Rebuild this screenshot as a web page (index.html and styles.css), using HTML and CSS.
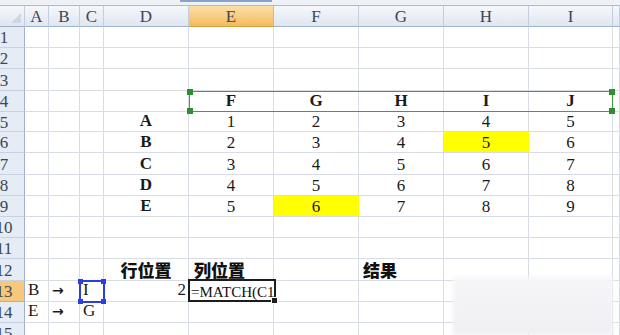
FILE: index.html
```html
<!DOCTYPE html>
<html lang="zh-CN">
<head>
    <meta charset="UTF-8">
    <meta name="viewport" content="width=device-width, initial-scale=1.0">
    <title>MATCH</title>
    <link rel="stylesheet" href="styles.css">
</head>
<body>

<div class="topbar"><span class="topbar-tab"></span></div>
<div class="sheet-wrap">
    <div class="sheet" id="sheet"></div>
</div>
<div class="blur-patch"></div>

<script>
    const letters = ['A', 'B', 'C', 'D', 'E', 'F', 'G', 'H', 'I', 'J'];
    const sheet = document.getElementById('sheet');

    // セルの中身
    const cells = {
        E4: ['F', 'bold'], F4: ['G', 'bold'], G4: ['H', 'bold'], H4: ['I', 'bold'], I4: ['J', 'bold'],
        D5: ['A', 'bold'], D6: ['B', 'bold'], D7: ['C', 'bold'], D8: ['D', 'bold'], D9: ['E', 'bold'],
        D12: ['行位置', 'cjk center'], E12: ['列位置', 'cjk left'], G12: ['结果', 'cjk left2'],
        A13: ['B', 'txt'], B13: ['→', 'arrow'], C13: ['I', 'txt'], D13: ['2', 'right'],
        A14: ['E', 'txt'], B14: ['→', 'arrow'], C14: ['G', 'txt']
    };
    // 5x5 の数字
    for (let r = 5; r <= 9; r++) {
        for (let c = 0; c < 5; c++) {
            cells[letters[4 + c] + r] = [String(r - 4 + c), 'num'];
        }
    }
    cells.H6[1] += ' hl';
    cells.F9[1] += ' hl';

    for (let r = 0; r <= 15; r++) {
        for (let c = 0; c <= 10; c++) {
            const div = document.createElement('div');
            div.className = 'cell';
            if (r === 0 && c === 0) {
                div.classList.add('head', 'corner');
            } else if (r === 0) {
                div.classList.add('head');
                if (c === 5) div.classList.add('active');
                // J列は画面の外なので文字なし
                if (c < 10) div.textContent = letters[c - 1];
            } else if (c === 0) {
                div.classList.add('rowhead');
                if (r === 13) div.classList.add('active');
                const span = document.createElement('span');
                span.textContent = r;
                div.appendChild(span);
            } else {
                const key = letters[c - 1] + r;
                if (cells[key]) {
                    div.textContent = cells[key][0];
                    div.className += ' ' + cells[key][1];
                }
                div.dataset.key = key;
            }
            sheet.appendChild(div);
        }
    }

    // 枠線（緑の範囲・青の参照・編集中セル）
    const handles = '<i class="hd tl"></i><i class="hd tr"></i><i class="hd bl"></i><i class="hd br"></i>';

    const range = document.createElement('div');
    range.className = 'range-box';
    range.innerHTML = handles;
    sheet.querySelector('[data-key="E4"]').appendChild(range);

    const ref = document.createElement('div');
    ref.className = 'ref-box';
    ref.innerHTML = handles;
    sheet.querySelector('[data-key="C13"]').appendChild(ref);

    const edit = document.createElement('div');
    edit.className = 'edit-box';
    edit.innerHTML = '<span>=MATCH(C1</span><b class="caret"></b><i class="fill"></i>';
    sheet.querySelector('[data-key="E13"]').appendChild(edit);
</script>

</body>
</html>
```

FILE: styles.css
```css
body {
    margin: 0;
    overflow: hidden;
    background: #fff;
    font-family: "Liberation Serif", "DejaVu Serif", serif;
}
.topbar {
    display: flex;
    height: 5px;
    background: #eef1f5;
    border-bottom: 1px solid #a9bcd3;
}
.topbar-tab {
    margin-left: 180px;
    width: 92px;
    height: 2px;
    background: #8aa3c6;
}
.sheet-wrap {
    width: 620px;
    height: 329px;
    overflow: hidden;
}
.sheet {
    display: grid;
    width: 620px;
    grid-template-columns: 25px 24px 31px 24px repeat(5, 85px) 84px 7px;
    grid-template-rows: 21px 21px 21px 22px 21px 20px 21px 22px 21px 21px 21px 21px 22px 21px 21px 21px;
}
.cell {
    position: relative;
    box-sizing: border-box;
    display: flex;
    align-items: flex-end;
    padding: 0 2px 2px;
    border-right: 1px solid #d8dce4;
    border-bottom: 1px solid #d8dce4;
    font-size: 17px;
    line-height: 16px;
    color: #1a1a1a;
    white-space: nowrap;
}

/* 見出し */
.head {
    justify-content: center;
    align-items: center;
    padding: 1px 0 0;
    background: linear-gradient(#f5f7fb, #dfe6f1);
    border-right-color: #c3cfde;
    border-bottom-color: #9fb3cb;
    color: #3b4755;
}
.head.active {
    background: linear-gradient(#fbdfa9, #f3bc5c);
    border-right-color: #e9b55a;
    border-bottom-color: #d89d3f;
}
.corner::after {
    content: "";
    position: absolute;
    right: 3px;
    bottom: 3px;
    border-style: solid;
    border-width: 0 0 10px 10px;
    border-color: transparent transparent #cdd6e2 transparent;
}
.rowhead {
    overflow: hidden;
    align-items: center;
    padding: 2px 0 0;
    background: #e5ecf6;
    border-right-color: #9fb3cb;
    border-bottom-color: #c6d2e2;
    color: #3b4755;
}
.rowhead span {
    flex: none;
    width: 40px;
    margin-left: -16px;
    text-align: center;
}
.rowhead.active {
    background: #f7c87a;
    border-bottom-color: #e0aa55;
}

/* 中身 */
.bold {
    justify-content: center;
    font-weight: bold;
}
.num {
    justify-content: center;
    padding-bottom: 1px;
}
.hl {
    background: #ffff00;
    border-right-color: #ffff00;
}
.cjk {
    font-family: "Noto Sans CJK SC", sans-serif;
    font-weight: 900;
    font-size: 17px;
    line-height: 20px;
    padding-bottom: 0;
    color: #111;
}
.center { justify-content: center; }
.left { padding-left: 5px; }
.left2 { padding-left: 4px; }
.txt {
    padding-left: 3px;
    padding-bottom: 3px;
}
.arrow {
    padding-left: 3px;
    padding-bottom: 4px;
    font-family: "DejaVu Sans", sans-serif;
    font-weight: bold;
    font-size: 14px;
    line-height: 14px;
}
.right {
    justify-content: flex-end;
    padding-right: 2px;
    padding-bottom: 3px;
}

/* 選択枠 */
.hd {
    position: absolute;
    width: 6px;
    height: 6px;
}
.tl { left: -3px; top: -3px; }
.tr { right: -3px; top: -3px; }
.bl { left: -3px; bottom: -3px; }
.br { right: -3px; bottom: -3px; }

.range-box {
    position: absolute;
    z-index: 2;
    left: 0;
    top: 0;
    box-sizing: border-box;
    width: 424px;
    height: 21px;
    border: 1px solid #3f9e3f;
}
.range-box .hd { background: #2f8f2f; }

.ref-box {
    position: absolute;
    z-index: 2;
    left: -1px;
    top: -1px;
    box-sizing: border-box;
    width: 26px;
    height: 23px;
    border: 2px solid #2a3fe0;
}
.ref-box .hd {
    width: 5px;
    height: 5px;
    background: #2a3fe0;
}

.edit-box {
    position: absolute;
    z-index: 2;
    left: -1px;
    top: -2px;
    box-sizing: border-box;
    display: flex;
    align-items: center;
    width: 88px;
    height: 23px;
    padding: 2px 0 0 1px;
    border: 2px solid #1c1c1c;
    background: #fff;
    font-size: 15px;
    color: #111;
}
.caret {
    width: 1px;
    height: 15px;
    background: #111;
}
.edit-box .fill {
    position: absolute;
    right: -4px;
    bottom: -4px;
    width: 5px;
    height: 5px;
    background: #1c1c1c;
    border: 1px solid #fff;
}

.blur-patch {
    position: absolute;
    z-index: 3;
    left: 453px;
    top: 277px;
    width: 160px;
    height: 58px;
    background: linear-gradient(#f6f6f8, #efeff2);
    filter: blur(2px);
}
```
